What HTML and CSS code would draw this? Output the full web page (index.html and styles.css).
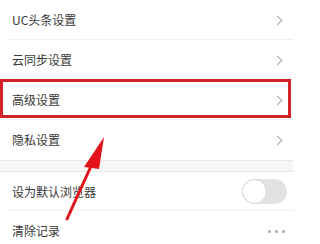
FILE: index.html
```html
<!DOCTYPE html>
<html lang="zh">
<head>
<meta charset="utf-8">
<link rel="stylesheet" href="styles.css">
</head>
<body>
<div class="page">
  <div class="group">
    <div class="row"><span class="label">UC头条设置</span><span class="chev"></span></div>
    <div class="row"><span class="label">云同步设置</span><span class="chev"></span></div>
    <div class="row"><span class="label">高级设置</span><span class="chev"></span></div>
    <div class="row last"><span class="label">隐私设置</span><span class="chev"></span></div>
  </div>
  <div class="gap"></div>
  <div class="group">
    <div class="row tall"><span class="label">设为默认浏览器</span><span class="toggle"><span class="knob"></span></span></div>
    <div class="row last"><span class="label">清除记录</span><span class="dots"><i></i><i></i><i></i></span></div>
  </div>
  <div class="highlight"></div>
  <svg class="arrow" width="293" height="244" viewBox="0 0 293 244">
    <line x1="92" y1="164" x2="67" y2="219" stroke="#e3131b" stroke-width="3" stroke-linecap="round"/>
    <polygon points="104,137 84,167 99,169" fill="#e3131b"/>
  </svg>
</div>
</body>
</html>
```
FILE: styles.css
```css
html, body {
  margin: 0;
  padding: 0;
  background: #fff;
}
.page {
  position: relative;
  width: 293px;
  height: 244px;
  overflow: hidden;
  font-family: "Noto Sans CJK SC", "Noto Sans", sans-serif;
  font-size: 12px;
  color: #383838;
}
.group {
  display: flex;
  flex-direction: column;
}
.row {
  height: 40px;
  flex: none;
  display: flex;
  align-items: center;
  justify-content: space-between;
  padding: 0 8px 0 12px;
  position: relative;
}
.row::after {
  content: "";
  position: absolute;
  left: 8px;
  right: 0;
  bottom: 0;
  height: 1px;
  background: #efefef;
}
.row.last::after {
  display: none;
}
.row.tall {
  height: 39px;
}
.label {
  line-height: 1;
}
.chev {
  width: 6px;
  height: 6px;
  border-top: 1.5px solid #aaa;
  border-right: 1.5px solid #aaa;
  transform: rotate(45deg);
  margin-right: 4px;
}
.gap {
  height: 10px;
  background: #f6f6f6;
  border-top: 1px solid #e8e8e8;
  border-bottom: 1px solid #e8e8e8;
}
.toggle {
  width: 45px;
  height: 25px;
  border-radius: 13px;
  background: #e2e2e2;
  position: relative;
  margin-right: -2px;
}
.knob {
  position: absolute;
  left: 0;
  top: 0;
  width: 23px;
  height: 23px;
  border-radius: 50%;
  background: #fff;
  border: 1px solid #d6d6d6;
}
.dots {
  display: flex;
  gap: 4px;
}
.dots i {
  width: 3px;
  height: 3px;
  border-radius: 50%;
  background: #aaa;
}
.highlight {
  position: absolute;
  left: 0;
  top: 79px;
  width: 291px;
  height: 39px;
  box-sizing: border-box;
  border: 3px solid #d1222b;
}
.arrow {
  position: absolute;
  left: 0;
  top: 0;
}
```
